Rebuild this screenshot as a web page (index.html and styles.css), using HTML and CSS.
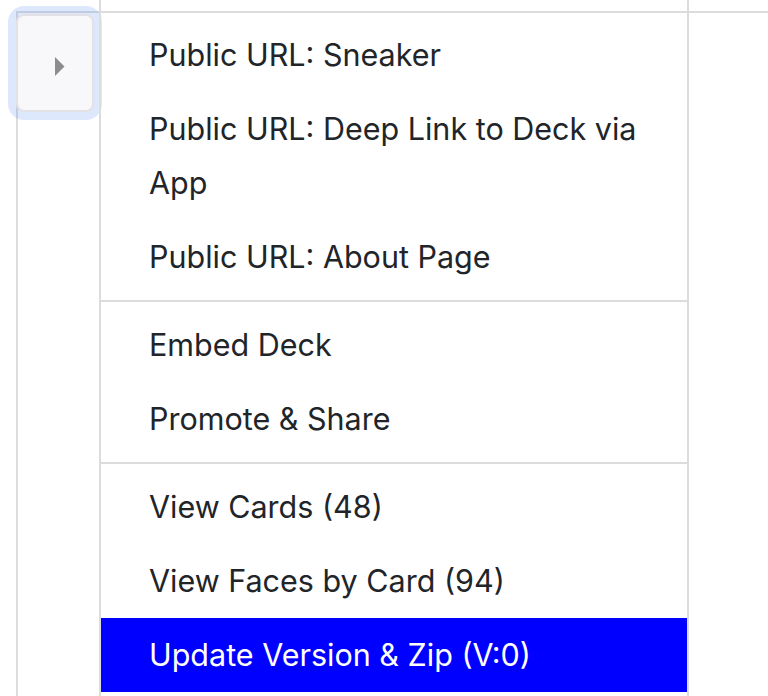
FILE: index.html
```html
<!DOCTYPE html>
<html lang="en">
<head>
<meta charset="utf-8">
<title>Deck actions</title>
<link rel="stylesheet" href="styles.css">
</head>
<body>
<div class="table">
  <div class="cell"></div>
  <div class="cell"></div>
  <div class="cell head-menu"></div>
  <div class="cell"></div>

  <div class="cell"></div>
  <div class="cell body-toggle">
    <button class="toggle" type="button" aria-label="Expand">
      <svg class="caret" width="10" height="19" viewBox="0 0 10 19"><path d="M0 0 L9.5 9.5 L0 19 Z" fill="#8c8c8c"/></svg>
    </button>
  </div>
  <div class="cell body-menu">
    <ul class="menu">
      <li class="item">Public URL: Sneaker</li>
      <li class="item">Public URL: Deep Link to Deck via App</li>
      <li class="item">Public URL: About Page</li>
      <li class="divider"></li>
      <li class="item">Embed Deck</li>
      <li class="item">Promote &amp; Share</li>
      <li class="divider"></li>
      <li class="item">View Cards (48)</li>
      <li class="item">View Faces by Card (94)</li>
      <li class="item active">Update Version &amp; Zip (V:0)</li>
    </ul>
  </div>
  <div class="cell body-rest"></div>
</div>
</body>
</html>
```
FILE: styles.css
```css
* { box-sizing: border-box; }
html, body { margin: 0; padding: 0; background: #fff; }
body {
  width: 768px;
  height: 696px;
  overflow: hidden;
  font-family: Inter, "Liberation Sans", sans-serif;
  color: #212529;
}
.table {
  display: grid;
  grid-template-columns: 16px 83px 590px 1fr;
  grid-template-rows: 11px 685px;
}
.cell { min-width: 0; }
.head-menu {
  border-left: 2px solid #dcdcdc;
  border-right: 2px solid #dcdcdc;
}
.body-toggle {
  border-left: 2px solid #dcdcdc;
  border-top: 2px solid #dcdcdc;
}
.body-menu {
  border-left: 2px solid #dcdcdc;
  border-right: 2px solid #dcdcdc;
  border-top: 2px solid #dcdcdc;
}
.body-rest {
  border-top: 2px solid #dcdcdc;
}
.toggle {
  display: flex;
  align-items: center;
  justify-content: center;
  width: 78px;
  height: 98px;
  margin: 1px 0 0 -2px;
  padding: 6px 0 0 9px;
  background: #f8f7fa;
  border: 2px solid #e3e1e5;
  border-radius: 8px;
  box-shadow: 0 0 0 8px rgba(90, 140, 240, 0.2);
}
.caret { display: block; }
.menu {
  list-style: none;
  margin: 0;
  padding: 5px 0 0;
}
.item {
  padding: 10px 49px 10px 48px;
  font-size: 30.5px;
  line-height: 54px;
}
.divider {
  height: 2px;
  margin: 6px 0;
  background: #dcdcdc;
}
.active {
  background: #0000ff;
  color: #fff;
}
```
